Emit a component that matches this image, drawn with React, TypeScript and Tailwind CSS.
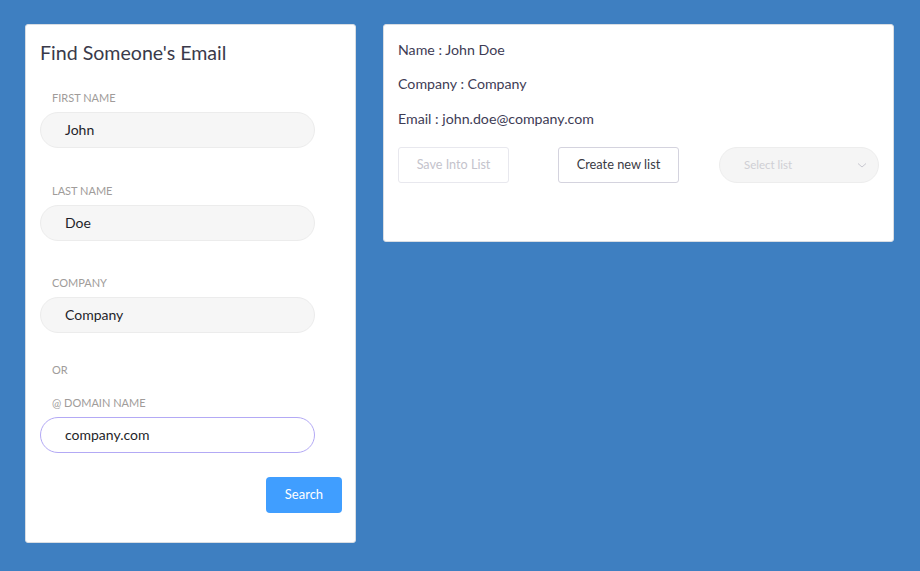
import React from "react";

const font = { fontFamily: "Lato, 'Open Sans', sans-serif" };

function Field({ label, value, focused, top }: { label: string; value: string; focused?: boolean; top: string }) {
  return (
    <div className={top}>
      <div className="pl-3 text-[11px] leading-[14px] uppercase text-[#a09c9a]">{label}</div>
      <div
        className={
          "mt-[7px] w-[275px] h-[36px] rounded-full flex items-center pl-[24px] pb-[1px] text-[14px] text-[#1f1f2a] " +
          (focused ? "bg-white border border-[#b3a9f5]" : "bg-[#f6f6f6] border border-[#ececec]")
        }
      >
        {value}
      </div>
    </div>
  );
}

export default function App() {
  return (
    <div className="w-[920px] h-[571px] bg-[#3e7fc1] flex items-start pt-[24px] pl-[25px] gap-[27px]" style={font}>
      <div className="w-[331px] h-[519px] bg-white rounded-[3px] border border-[#d8dde3] pl-[14px] pr-[13px] pt-[16px] flex flex-col">
        <div className="text-[19.6px] leading-[24px] text-[#3a3a4a]">Find Someone's Email</div>
        <Field top="mt-[26px]" label="First Name" value="John" />
        <Field top="mt-[36px]" label="Last Name" value="Doe" />
        <Field top="mt-[35px]" label="Company" value="Company" />
        <div className="mt-[30px] pl-3 text-[11px] leading-[14px] uppercase text-[#a09c9a]">OR</div>
        <Field top="mt-[19px]" label="@ Domain Name" value="company.com" focused />
        <div className="mt-[24px] flex justify-end">
          <button className="w-[76px] h-[36px] rounded-[4px] bg-[#409eff] text-white text-[13px]">Search</button>
        </div>
      </div>
      <div className="w-[511px] h-[218px] bg-white rounded-[3px] border border-[#d8dde3] px-[14px] pt-[15px]">
        <div className="text-[14.2px] leading-[20px] text-[#3e3c55]">Name : John Doe</div>
        <div className="mt-[14px] text-[14.2px] leading-[20px] text-[#3e3c55]">Company : Company</div>
        <div className="mt-[15px] text-[14.2px] leading-[20px] text-[#3e3c55]">Email : john.doe@company.com</div>
        <div className="mt-[18px] flex items-center">
          <button className="w-[111px] h-[36px] rounded-[3px] border border-[#e8e8ee] text-[12.6px] text-[#c4c3cc]">Save Into List</button>
          <button className="ml-[49px] w-[121px] h-[36px] rounded-[3px] border border-[#d4d3de] text-[12.8px] text-[#3a3a44]">Create new list</button>
          <div className="ml-[40px] w-[160px] h-[36px] rounded-full bg-[#f5f5f5] border border-[#ededed] flex items-center pl-[24px] pr-[10px] text-[11.5px] text-[#cfcfd4]">
            <span className="flex-1">Select list</span>
            <svg width="12" height="12" viewBox="0 0 12 12" fill="none" stroke="#c8c8d0" strokeWidth="1">
              <path d="M2 4.5 L6 8 L10 4.5" />
            </svg>
          </div>
        </div>
      </div>
    </div>
  );
}
